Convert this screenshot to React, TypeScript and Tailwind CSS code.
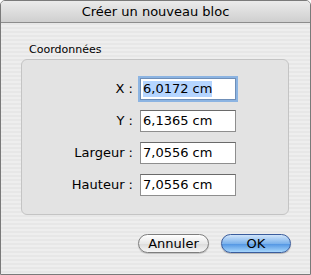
const font = "font-['Lucida_Grande','DejaVu_Sans',sans-serif]";

const fields = [
  { label: "X :", value: "6,0172 cm", focused: true },
  { label: "Y :", value: "6,1365 cm" },
  { label: "Largeur :", value: "7,0556 cm" },
  { label: "Hauteur :", value: "7,0556 cm" },
];

function Field({ label, value, focused }: { label: string; value: string; focused?: boolean }) {
  return (
    <div className="flex h-[22px] items-center">
      <span className="w-[118px] pr-[7px] text-right text-[13px] text-black">{label}</span>
      <div
        className={
          focused
            ? "flex h-[22px] w-[96px] items-center border border-[#6f8fb8] bg-white pl-[2px] shadow-[0_0_0_2px_#8cb4e2]"
            : "flex h-[22px] w-[96px] items-center border border-[#8e8e8e] border-t-[#6a6a6a] bg-white pl-[2px]"
        }
      >
        <span className={focused ? "bg-[#b5d5ff] text-[13px] leading-[16px] text-black" : "text-[13px] leading-[16px] text-black"}>
          {value}
        </span>
      </div>
    </div>
  );
}

export default function App() {
  return (
    <div
      className={`${font} flex h-[275px] w-[311px] flex-col overflow-hidden rounded-t-[5px] border border-[#7a7a7a] bg-[repeating-linear-gradient(180deg,#eeeeee_0px,#eeeeee_2px,#e7e7e7_2px,#e7e7e7_4px)]`}
    >
      <div className="flex h-[22px] shrink-0 items-center justify-center border-b border-[#8c8c8c] bg-[linear-gradient(180deg,#ebebeb,#cfcfcf)] text-[13px] text-black">
        Créer un nouveau bloc
      </div>
      <div className="flex flex-1 flex-col pl-[20px] pt-[20px]">
        <div className="pl-[8px] text-[11px] leading-[14px] text-black">Coordonnées</div>
        <div className="mt-[2px] flex h-[156px] w-[268px] flex-col gap-[10px] rounded-[6px] border border-[#c4c4c4] bg-[#e3e3e3] pt-[18px]">
          {fields.map((f) => (
            <Field key={f.label} {...f} />
          ))}
        </div>
        <div className="mt-[19px] flex w-[270px] justify-end gap-[12px]">
          <button className="h-[19px] w-[71px] rounded-full border border-[#7e7e7e] bg-[linear-gradient(180deg,#ffffff,#e8e8e8_50%,#dadada_51%,#f6f6f6)] text-[13px] leading-[16px] text-black shadow-[0_1px_1px_rgba(0,0,0,0.2)]">
            Annuler
          </button>
          <button className="h-[19px] w-[70px] rounded-full border border-[#3a5c9c] bg-[linear-gradient(180deg,#d0e4fa,#7db3ec_50%,#4f93e2_51%,#a6d6fc)] text-[13px] leading-[16px] text-black shadow-[0_1px_1px_rgba(0,0,0,0.25)]">
            OK
          </button>
        </div>
      </div>
    </div>
  );
}
